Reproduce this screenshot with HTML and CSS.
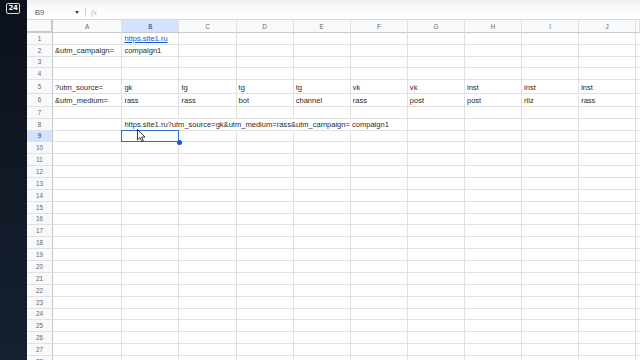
FILE: index.html
```html
<!DOCTYPE html>
<html>
<head>
<meta charset="utf-8">
<link rel="stylesheet" href="styles.css">
</head>
<body>
<div class="dock"><div class="badge">24</div></div>
<div class="app">
  <div class="toolbar">
    <span class="namebox">B9</span>
    <span class="caret"></span>
    <span class="sep"></span>
    <span class="fx">fx</span>
  </div>
  <div class="sheet">
    <div class="row hdr"><div class="rh corner"></div><div class="c">A</div><div class="c sel">B</div><div class="c">C</div><div class="c">D</div><div class="c">E</div><div class="c">F</div><div class="c">G</div><div class="c">H</div><div class="c">I</div><div class="c">J</div><div class="c"></div></div>
    <div class="row"><div class="rh">1</div><div class="c"></div><div class="c"><span class="link">https.site1.ru</span></div><div class="c"></div><div class="c"></div><div class="c"></div><div class="c"></div><div class="c"></div><div class="c"></div><div class="c"></div><div class="c"></div><div class="c"></div></div>
    <div class="row"><div class="rh">2</div><div class="c">&amp;utm_campaign=</div><div class="c">compaign1</div><div class="c"></div><div class="c"></div><div class="c"></div><div class="c"></div><div class="c"></div><div class="c"></div><div class="c"></div><div class="c"></div><div class="c"></div></div>
    <div class="row"><div class="rh">3</div><div class="c"></div><div class="c"></div><div class="c"></div><div class="c"></div><div class="c"></div><div class="c"></div><div class="c"></div><div class="c"></div><div class="c"></div><div class="c"></div><div class="c"></div></div>
    <div class="row"><div class="rh">4</div><div class="c"></div><div class="c"></div><div class="c"></div><div class="c"></div><div class="c"></div><div class="c"></div><div class="c"></div><div class="c"></div><div class="c"></div><div class="c"></div><div class="c"></div></div>
    <div class="row tall"><div class="rh">5</div><div class="c">?utm_source=</div><div class="c">gk</div><div class="c">tg</div><div class="c">tg</div><div class="c">tg</div><div class="c">vk</div><div class="c">vk</div><div class="c">inst</div><div class="c">inst</div><div class="c">inst</div><div class="c"></div></div>
    <div class="row tall"><div class="rh">6</div><div class="c">&amp;utm_medium=</div><div class="c">rass</div><div class="c">rass</div><div class="c">bot</div><div class="c">channel</div><div class="c">rass</div><div class="c">post</div><div class="c">post</div><div class="c">rilz</div><div class="c">rass</div><div class="c"></div></div>
    <div class="row"><div class="rh">7</div><div class="c"></div><div class="c"></div><div class="c"></div><div class="c"></div><div class="c"></div><div class="c"></div><div class="c"></div><div class="c"></div><div class="c"></div><div class="c"></div><div class="c"></div></div>
    <div class="row"><div class="rh">8</div><div class="c"></div><div class="c ov">https.site1.ru?utm_source=gk&amp;utm_medium=rass&amp;utm_campaign= compaign1</div><div class="c ov"></div><div class="c ov"></div><div class="c ov"></div><div class="c"></div><div class="c"></div><div class="c"></div><div class="c"></div><div class="c"></div><div class="c"></div></div>
    <div class="row"><div class="rh sel">9</div><div class="c"></div><div class="c active"></div><div class="c"></div><div class="c"></div><div class="c"></div><div class="c"></div><div class="c"></div><div class="c"></div><div class="c"></div><div class="c"></div><div class="c"></div></div>
    <div class="row"><div class="rh">10</div><div class="c"></div><div class="c"></div><div class="c"></div><div class="c"></div><div class="c"></div><div class="c"></div><div class="c"></div><div class="c"></div><div class="c"></div><div class="c"></div><div class="c"></div></div>
    <div class="row r2"><div class="rh">11</div><div class="c"></div><div class="c"></div><div class="c"></div><div class="c"></div><div class="c"></div><div class="c"></div><div class="c"></div><div class="c"></div><div class="c"></div><div class="c"></div><div class="c"></div></div>
    <div class="row r2"><div class="rh">12</div><div class="c"></div><div class="c"></div><div class="c"></div><div class="c"></div><div class="c"></div><div class="c"></div><div class="c"></div><div class="c"></div><div class="c"></div><div class="c"></div><div class="c"></div></div>
    <div class="row r2"><div class="rh">13</div><div class="c"></div><div class="c"></div><div class="c"></div><div class="c"></div><div class="c"></div><div class="c"></div><div class="c"></div><div class="c"></div><div class="c"></div><div class="c"></div><div class="c"></div></div>
    <div class="row r2"><div class="rh">14</div><div class="c"></div><div class="c"></div><div class="c"></div><div class="c"></div><div class="c"></div><div class="c"></div><div class="c"></div><div class="c"></div><div class="c"></div><div class="c"></div><div class="c"></div></div>
    <div class="row r2"><div class="rh">15</div><div class="c"></div><div class="c"></div><div class="c"></div><div class="c"></div><div class="c"></div><div class="c"></div><div class="c"></div><div class="c"></div><div class="c"></div><div class="c"></div><div class="c"></div></div>
    <div class="row r2"><div class="rh">16</div><div class="c"></div><div class="c"></div><div class="c"></div><div class="c"></div><div class="c"></div><div class="c"></div><div class="c"></div><div class="c"></div><div class="c"></div><div class="c"></div><div class="c"></div></div>
    <div class="row r2"><div class="rh">17</div><div class="c"></div><div class="c"></div><div class="c"></div><div class="c"></div><div class="c"></div><div class="c"></div><div class="c"></div><div class="c"></div><div class="c"></div><div class="c"></div><div class="c"></div></div>
    <div class="row r2"><div class="rh">18</div><div class="c"></div><div class="c"></div><div class="c"></div><div class="c"></div><div class="c"></div><div class="c"></div><div class="c"></div><div class="c"></div><div class="c"></div><div class="c"></div><div class="c"></div></div>
    <div class="row r2"><div class="rh">19</div><div class="c"></div><div class="c"></div><div class="c"></div><div class="c"></div><div class="c"></div><div class="c"></div><div class="c"></div><div class="c"></div><div class="c"></div><div class="c"></div><div class="c"></div></div>
    <div class="row r2"><div class="rh">20</div><div class="c"></div><div class="c"></div><div class="c"></div><div class="c"></div><div class="c"></div><div class="c"></div><div class="c"></div><div class="c"></div><div class="c"></div><div class="c"></div><div class="c"></div></div>
    <div class="row r2"><div class="rh">21</div><div class="c"></div><div class="c"></div><div class="c"></div><div class="c"></div><div class="c"></div><div class="c"></div><div class="c"></div><div class="c"></div><div class="c"></div><div class="c"></div><div class="c"></div></div>
    <div class="row r2"><div class="rh">22</div><div class="c"></div><div class="c"></div><div class="c"></div><div class="c"></div><div class="c"></div><div class="c"></div><div class="c"></div><div class="c"></div><div class="c"></div><div class="c"></div><div class="c"></div></div>
    <div class="row r2"><div class="rh">23</div><div class="c"></div><div class="c"></div><div class="c"></div><div class="c"></div><div class="c"></div><div class="c"></div><div class="c"></div><div class="c"></div><div class="c"></div><div class="c"></div><div class="c"></div></div>
    <div class="row r2"><div class="rh">24</div><div class="c"></div><div class="c"></div><div class="c"></div><div class="c"></div><div class="c"></div><div class="c"></div><div class="c"></div><div class="c"></div><div class="c"></div><div class="c"></div><div class="c"></div></div>
    <div class="row r2"><div class="rh">25</div><div class="c"></div><div class="c"></div><div class="c"></div><div class="c"></div><div class="c"></div><div class="c"></div><div class="c"></div><div class="c"></div><div class="c"></div><div class="c"></div><div class="c"></div></div>
    <div class="row r2"><div class="rh">26</div><div class="c"></div><div class="c"></div><div class="c"></div><div class="c"></div><div class="c"></div><div class="c"></div><div class="c"></div><div class="c"></div><div class="c"></div><div class="c"></div><div class="c"></div></div>
    <div class="row r2"><div class="rh">27</div><div class="c"></div><div class="c"></div><div class="c"></div><div class="c"></div><div class="c"></div><div class="c"></div><div class="c"></div><div class="c"></div><div class="c"></div><div class="c"></div><div class="c"></div></div>
    <div class="row r2"><div class="rh">28</div><div class="c"></div><div class="c"></div><div class="c"></div><div class="c"></div><div class="c"></div><div class="c"></div><div class="c"></div><div class="c"></div><div class="c"></div><div class="c"></div><div class="c"></div></div>
  </div>
</div>
<svg class="cursor" width="9" height="14" viewBox="0 0 9 14"><path d="M0.5 0.5 L0.5 11 L3 8.6 L4.8 12.6 L6.4 11.9 L4.7 8 L8 8 Z" fill="#fff" stroke="#222" stroke-width="0.9" stroke-linejoin="round"/></svg>
</body>
</html>
```
FILE: styles.css
```css
html, body {
  margin: 0;
  padding: 0;
}
body {
  width: 640px;
  height: 360px;
  overflow: hidden;
  display: flex;
  background: #fff;
  font-family: "Liberation Sans", Arial, sans-serif;
  position: relative;
}
.dock {
  width: 27px;
  flex: none;
  background: linear-gradient(#0c121c, #162030);
  padding: 3px 0 0 6px;
  box-sizing: border-box;
}
.badge {
  width: 14px;
  height: 11px;
  border: 1px solid #d8dbe0;
  border-radius: 2px;
  box-sizing: border-box;
  color: #fff;
  font-size: 7px;
  font-weight: bold;
  line-height: 9px;
  text-align: center;
  font-family: "DejaVu Sans", sans-serif;
  letter-spacing: -0.3px;
}
.app {
  flex: 1;
  display: flex;
  flex-direction: column;
  min-width: 0;
}
.toolbar {
  height: 20px;
  flex: none;
  box-sizing: border-box;
  background: linear-gradient(#eef0f3, #fbfbfc 45%, #fff);
  display: flex;
  align-items: center;
  padding: 6px 0 0 8px;
  border-bottom: 1px solid #d6d8da;
}
.namebox {
  font-size: 7.5px;
  color: #555;
  width: 40px;
}
.caret {
  width: 0;
  height: 0;
  border-left: 2.5px solid transparent;
  border-right: 2.5px solid transparent;
  border-top: 3px solid #444;
}
.sep {
  width: 1px;
  height: 9px;
  background: #d0d0d0;
  margin: 0 5px 0 6px;
}
.fx {
  font-family: "Liberation Serif", serif;
  font-style: italic;
  font-size: 8px;
  color: #b8b8b8;
}
.sheet {
  flex: 1;
  display: flex;
  flex-direction: column;
}
.row {
  display: grid;
  grid-template-columns: 26px 69.4px repeat(9, 57.1px) 1fr;
  height: 11.8px;
  flex: none;
}
.row.tall { height: 13.4px; }
.row.r2 { height: 11.875px; }
.row.hdr { height: 13px; }
.c, .rh {
  box-sizing: border-box;
  border-right: 1px solid #e1e1e1;
  border-bottom: 1px solid #e1e1e1;
  font-size: 7.55px;
  color: #2a2a2a;
  white-space: nowrap;
  display: flex;
  align-items: flex-end;
  padding: 0 2px 1px 2px;
  line-height: 9px;
  min-width: 0;
}
.c.ov { border-right-color: transparent; }
.rh {
  background: #f8f9fa;
  border-right: 1px solid #c7c9cb;
  justify-content: center;
  align-items: center;
  padding: 0;
  color: #666;
  font-size: 6.3px;
}
.hdr .c {
  background: #f8f9fa;
  justify-content: center;
  align-items: center;
  padding: 0;
  color: #666;
  font-size: 6.3px;
  border-bottom: 1px solid #c7c9cb;
}
.hdr .corner {
  border-bottom: 2px solid #c7c9cb;
  border-right: 2px solid #c7c9cb;
}
.hdr .c.sel, .rh.sel {
  background: #d3e3fd;
  color: #0b3a8c;
}
.link {
  color: #1155cc;
  text-decoration: underline;
}
.c.active {
  position: relative;
}
.c.active::after {
  content: "";
  position: absolute;
  left: -1px;
  top: -1px;
  right: -1px;
  bottom: -1px;
  border: 1.5px solid #2c6bd1;
}
.c.active::before {
  content: "";
  position: absolute;
  right: -3.5px;
  bottom: -3.5px;
  width: 5px;
  height: 5px;
  border-radius: 50%;
  background: #1b58c4;
  z-index: 2;
}
.cursor {
  position: absolute;
  left: 137px;
  top: 129px;
}
```
